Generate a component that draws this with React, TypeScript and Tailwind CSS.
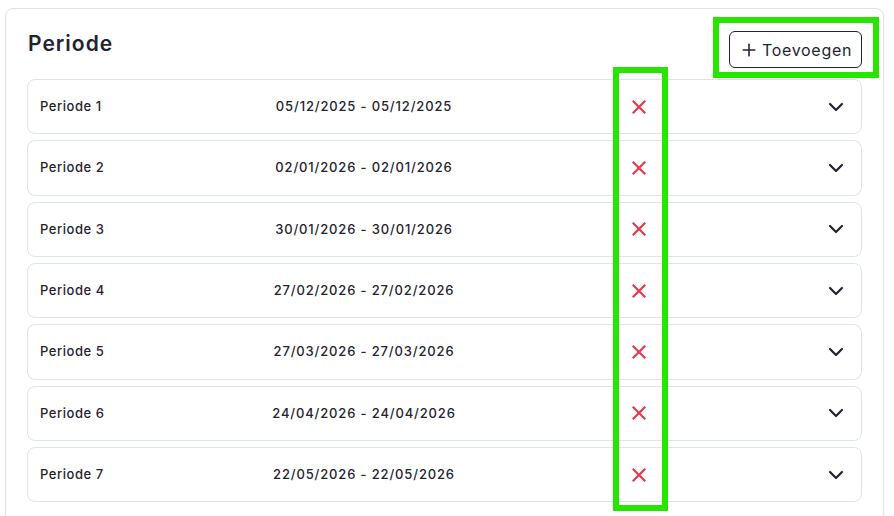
import { Plus, ChevronDown } from "lucide-react"

const periods = [
  { name: "Periode 1", range: "05/12/2025 - 05/12/2025" },
  { name: "Periode 2", range: "02/01/2026 - 02/01/2026" },
  { name: "Periode 3", range: "30/01/2026 - 30/01/2026" },
  { name: "Periode 4", range: "27/02/2026 - 27/02/2026" },
  { name: "Periode 5", range: "27/03/2026 - 27/03/2026" },
  { name: "Periode 6", range: "24/04/2026 - 24/04/2026" },
  { name: "Periode 7", range: "22/05/2026 - 22/05/2026" },
]

function RemoveIcon() {
  return (
    <svg width="14" height="14" viewBox="0 0 14 14" className="text-[#e23b4e]">
      <path d="M1.5 1.5 L12.5 12.5 M12.5 1.5 L1.5 12.5" stroke="currentColor" strokeWidth="2.2" strokeLinecap="square" />
    </svg>
  )
}

function PeriodRow({ name, range }: { name: string; range: string }) {
  return (
    <div className="grid h-[55.33px] grid-cols-[151px_346px_204px_1fr] items-center rounded-lg border border-[#dce4e6] bg-white pl-3 pr-4 text-[13px] text-[#1f2430]">
      <span className="font-medium tracking-[0.55px]">{name}</span>
      <span className="text-center font-medium tracking-[0.85px]">{range}</span>
      <span className="flex justify-center">
        <RemoveIcon />
      </span>
      <span className="flex justify-end">
        <ChevronDown size={24} strokeWidth={2.2} className="-mr-[3px] text-[#1f2430]" />
      </span>
    </div>
  )
}

export default function App() {
  return (
    <div className="relative h-[516px] w-[894px] overflow-hidden bg-white font-['Inter',sans-serif]">
      <div className="ml-[5px] mt-[8px] w-[879px] rounded-lg border border-[#dde4e7] bg-white px-[21px] pb-6 pt-[22px]">
        <div className="flex items-start justify-between">
          <h2 className="-mt-[3px] pl-px text-[21px] font-semibold tracking-[1px] text-[#1f2430]">Periode</h2>
          <button className="flex h-[37px] w-[133px] items-center justify-center gap-[3px] rounded-md border border-[#1e2433] text-[16px] font-normal tracking-[0.7px] text-[#1e2433]">
            <Plus size={20} strokeWidth={1.9} />
            Toevoegen
          </button>
        </div>
        <div className="mt-[11px] flex flex-col gap-[6px]">
          {periods.map((p) => (
            <PeriodRow key={p.name} name={p.name} range={p.range} />
          ))}
        </div>
      </div>
      <div className="pointer-events-none absolute left-[713px] top-[17px] h-[61px] w-[166px] border-[6px] border-[#28e500]" />
      <div className="pointer-events-none absolute left-[613px] top-[67px] h-[444px] w-[55px] border-[6px] border-[#28e500]" />
    </div>
  )
}
